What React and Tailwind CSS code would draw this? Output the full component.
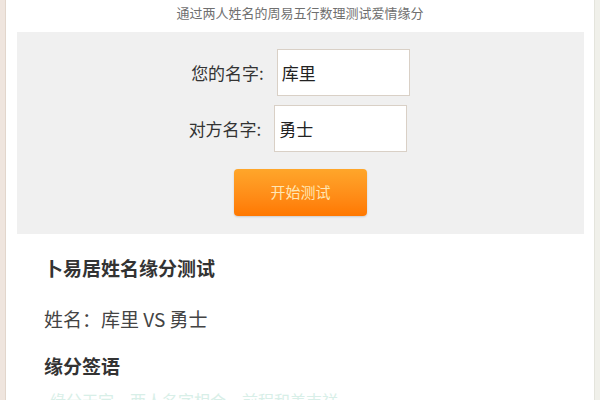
import React from "react";

const font = { fontFamily: '"Noto Sans CJK SC", "Noto Sans", sans-serif' };

function NameRow({ label, value }) {
  return (
    <div className="flex items-center justify-center gap-[13px]">
      <span className="text-[17px] leading-[24px] text-[#333]">{label}</span>
      <div className="w-[133px] h-[47px] bg-white border border-[#d9d0c6] flex items-center pl-[4px] text-[17px] text-[#222]">
        {value}
      </div>
    </div>
  );
}

export default function App() {
  return (
    <div className="w-[600px] h-[400px] overflow-hidden flex bg-white" style={font}>
      <div className="w-[6px] bg-[#efe5de] border-r border-[#e2d6cc]" />
      <div className="flex-1 flex flex-col">
        <p className="text-center text-[13px] leading-[20px] text-[#6f6f6f] mt-[3px]">
          通过两人姓名的周易五行数理测试爱情缘分
        </p>
        <div className="mt-[9px] ml-[11px] mr-[10px] bg-[#f0f0f0] pt-[17px] pb-[18px] flex flex-col items-center">
          <NameRow label="您的名字:" value="库里" />
          <div className="mt-[9px] mr-[5px]">
            <NameRow label="对方名字:" value="勇士" />
          </div>
          <button className="mt-[17px] w-[133px] h-[47px] rounded-[4px] bg-gradient-to-b from-[#ffa62a] to-[#ff7800] shadow-[0_1px_2px_rgba(0,0,0,0.15)] text-[15px] text-[#ffe6b3]">
            开始测试
          </button>
        </div>
        <div className="pl-[38px]">
          <h2 className="mt-[22px] text-[19px] leading-[24px] font-bold text-[#333]">
            卜易居姓名缘分测试
          </h2>
          <p className="mt-[27px] text-[19px] leading-[24px] text-[#444]">
            姓名：库里 VS 勇士
          </p>
          <h3 className="mt-[23px] text-[19px] leading-[24px] font-bold text-[#333]">
            缘分签语
          </h3>
          <p className="mt-[10px] ml-[6px] text-[16px] leading-[24px] text-[#d8efe8]">
            缘分天定，两人名字相合，前程和美吉祥
          </p>
        </div>
      </div>
      <div className="w-[6px] bg-[#f0f0ea] border-l border-[#e4e4dc]" />
    </div>
  );
}
